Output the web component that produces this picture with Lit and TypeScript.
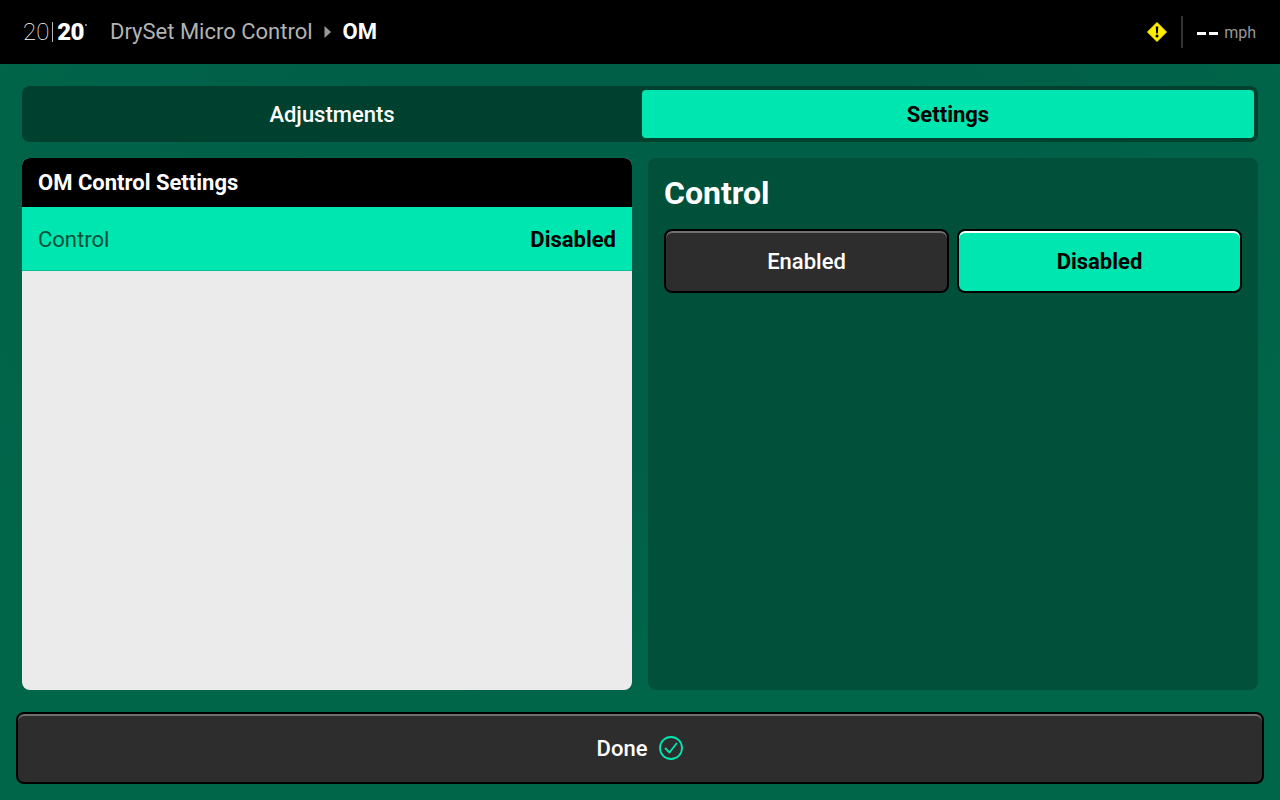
import { LitElement, html, css } from "lit";
import { customElement } from "lit/decorators.js";

@customElement("app-root")
export class AppRoot extends LitElement {
  static styles = css`
    :host { display: block; width: 1280px; height: 800px; overflow: hidden; font-family: Roboto, sans-serif; background: #00664a; color: #fff; }
    * { box-sizing: border-box; }
    .top { height: 64px; background: #000; display: flex; align-items: center; padding: 0 24px 0 23px; }
    .logo { display: flex; align-items: center; width: 63px; height: 20px; font-size: 24px; line-height: 20px; }
    .logo .thin { font-weight: 100; color: #fff; }
    .logo .sep { width: 1px; height: 20px; background: #bbb; margin: 0 4px 0 3px; flex: none; }
    .logo .bold { font-weight: 900; position: relative; letter-spacing: -0.6px; }
    .logo sup { position: absolute; right: -3px; top: 2px; width: 2px; height: 2px; border-radius: 50%; background: #aaa; }
    .crumb { margin: -2px 0 0 24px; font-size: 22px; color: #b3b3b3; }
    .arrow { margin: 0 11px 0 11px; display: block; }
    .cur { margin-top: -2px; font-size: 22px; font-weight: 700; color: #fff; }
    .right { margin-left: auto; display: flex; align-items: center; }
    .warn { display: block; margin-right: 14px; }
    .vr { width: 2px; height: 32px; background: #333; margin-right: 14px; }
    .dashes { display: flex; gap: 3px; margin: 2px 6px 0 0; }
    .dashes i { display: block; width: 9px; height: 3px; background: #fff; }
    .mph { font-size: 16px; color: #999; }

    .main { height: 736px; display: flex; flex-direction: column; background: radial-gradient(ellipse 800px 500px at 50% 20%, #005f47 40%, #00664a 100%); }
    .content { height: 648px; padding: 22px 22px 0; display: flex; flex-direction: column; }
    .tabs { height: 56px; padding: 4px; background: #00402e; border-radius: 8px; display: grid; grid-template-columns: 1fr 1fr; gap: 4px; }
    .tab { border-radius: 4px; display: flex; align-items: center; justify-content: center; font-size: 22px; font-weight: 500; }
    .tab.on { background: #00e6b0; color: #000; font-weight: 700; }
    .cols { margin-top: 16px; display: grid; grid-template-columns: 1fr 1fr; gap: 16px; height: 532px; }
    .panel { min-width: 0; border-radius: 8px; overflow: hidden; }
    .list { background: #ebebeb; }
    .list-h { height: 49px; background: #000; padding: 0 16px; display: flex; align-items: center; font-size: 22px; font-weight: 700; }
    .row { height: 64px; background: #00e6b0; border-bottom: 1px solid #00bf92; padding: 1px 16px 0; display: flex; align-items: center; justify-content: space-between; font-size: 22px; }
    .row .k { color: #00503a; }
    .row .v { color: #000; font-weight: 700; }
    .detail { background: #00503a; padding: 16px; }
    .detail h2 { margin: 0; font-size: 32px; line-height: 38px; font-weight: 700; }
    .opts { margin-top: 17px; display: grid; grid-template-columns: 1fr 1fr; gap: 8px; }
    .btn { height: 64px; border: 2px solid #000; border-radius: 8px; background: #2d2d2d; box-shadow: inset 0 2px 0 #707070; display: flex; align-items: center; justify-content: center; font-size: 22px; font-weight: 500; color: #fff; }
    .btn.on { background: #00e6b0; color: #000; font-weight: 700; box-shadow: inset 0 2px 0 #fff; }
    .foot { flex: 1; padding: 0 16px 16px; display: flex; align-items: flex-end; }
    .done { flex: none; width: 100%; height: 72px; gap: 12px; }
    .done svg { display: block; }
  `;

  render() {
    return html`
      <div class="top">
        <div class="logo"><span class="thin">20</span><span class="sep"></span><span class="bold">20<sup></sup></span></div>
        <span class="crumb">DrySet Micro Control</span>
        <svg class="arrow" width="8" height="12" viewBox="0 0 8 12"><path d="M0.5 0L7 6L0.5 12Z" fill="#999"/></svg>
        <span class="cur">OM</span>
        <div class="right">
          <svg class="warn" width="20" height="20" viewBox="0 0 20 20">
            <path d="M10 0.5L19.5 10L10 19.5L0.5 10Z" fill="#ffee00" stroke="#ffee00" stroke-linejoin="round"/>
            <path d="M8.7 4.5h2.6L10.8 11.5H9.2Z" fill="#000"/><circle cx="10" cy="14" r="1.5" fill="#000"/>
          </svg>
          <div class="vr"></div>
          <div class="dashes"><i></i><i></i></div>
          <span class="mph">mph</span>
        </div>
      </div>
      <div class="main">
        <div class="content">
          <div class="tabs">
            <div class="tab">Adjustments</div>
            <div class="tab on">Settings</div>
          </div>
          <div class="cols">
            <section class="panel list">
              <div class="list-h">OM Control Settings</div>
              <div class="row"><span class="k">Control</span><span class="v">Disabled</span></div>
            </section>
            <section class="panel detail">
              <h2>Control</h2>
              <div class="opts">
                <div class="btn">Enabled</div>
                <div class="btn on">Disabled</div>
              </div>
            </section>
          </div>
        </div>
        <div class="foot">
          <div class="btn done">
            <span>Done</span>
            <svg width="24" height="24" viewBox="0 0 24 24" fill="none" stroke="#00e6b0" stroke-width="1.8"><circle cx="12" cy="12" r="11"/><path d="M6.5 12.5L10.5 16.5L17.5 7.5" stroke-linecap="round" stroke-linejoin="round"/></svg>
          </div>
        </div>
      </div>
    `;
  }
}
